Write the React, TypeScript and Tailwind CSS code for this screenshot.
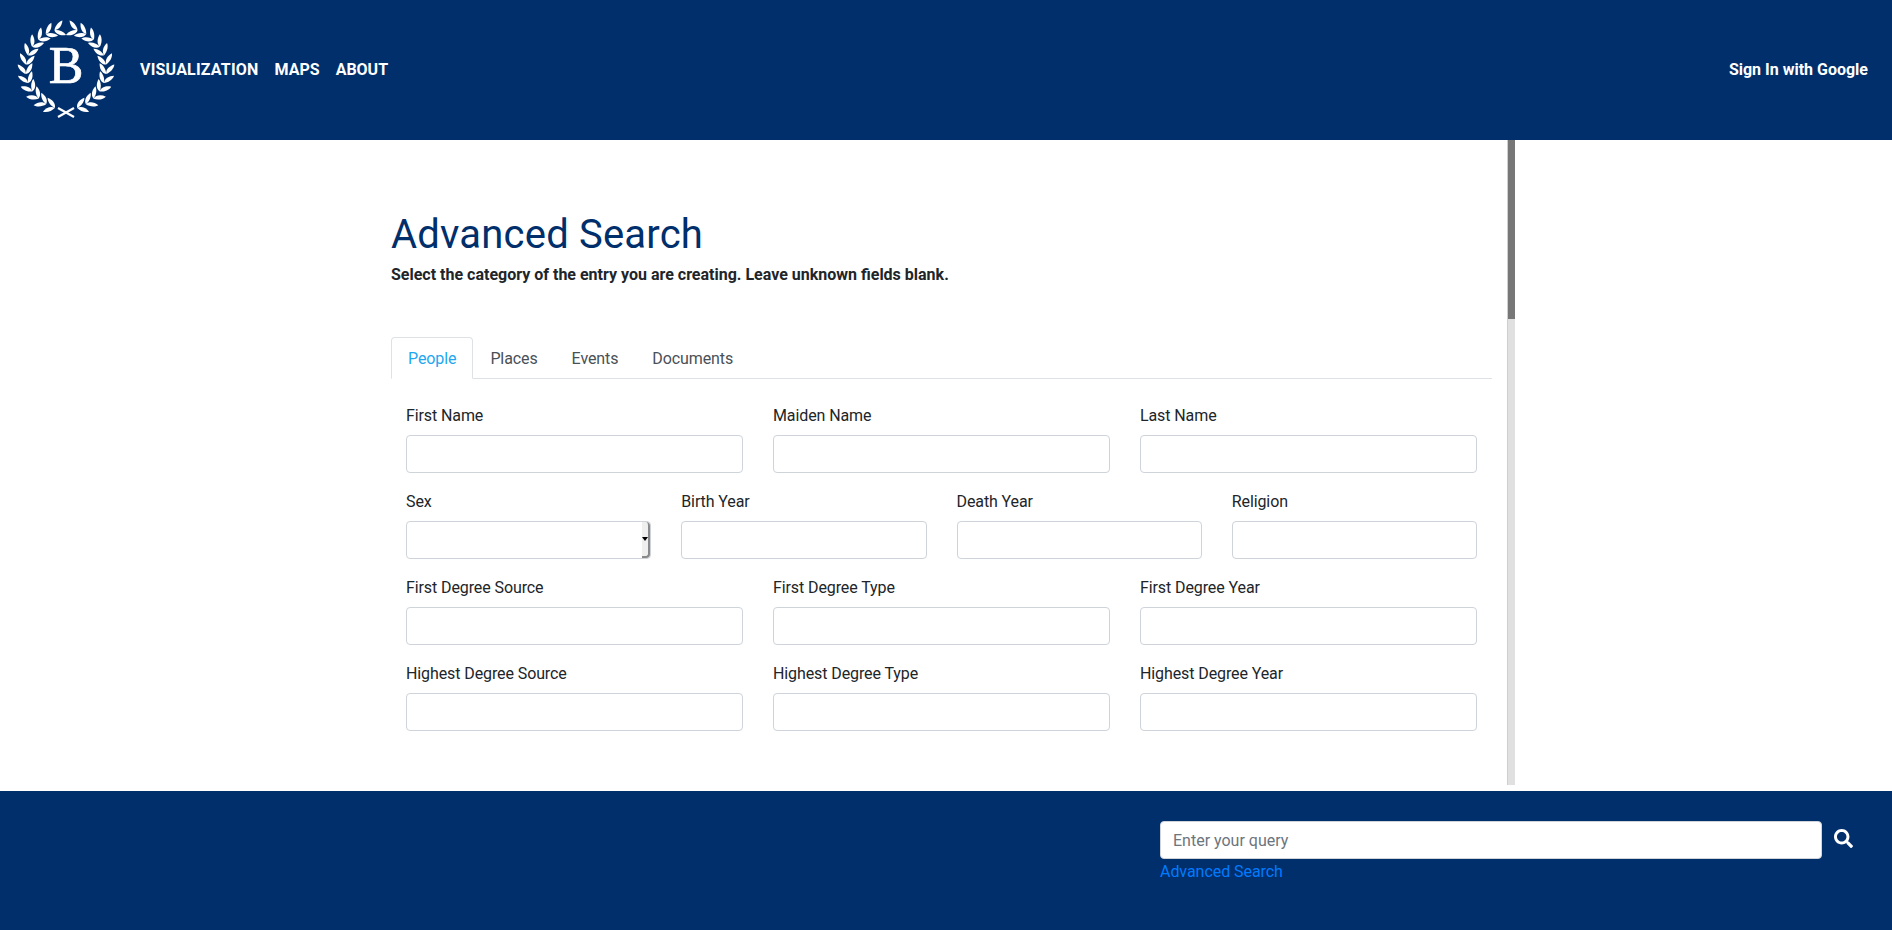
import { FaSearch } from "react-icons/fa";

const rows = [
  { cols: "grid-cols-3", fields: ["First Name", "Maiden Name", "Last Name"] },
  { cols: "grid-cols-4", fields: ["Sex", "Birth Year", "Death Year", "Religion"] },
  { cols: "grid-cols-3", fields: ["First Degree Source", "First Degree Type", "First Degree Year"] },
  { cols: "grid-cols-3", fields: ["Highest Degree Source", "Highest Degree Type", "Highest Degree Year"] },
];

const tabs = ["People", "Places", "Events", "Documents"];

// one side of the wreath, mirrored for the other
const leaves = Array.from({ length: 12 }, (_, i) => {
  const angle = 106 + i * 13.4;
  const rad = (angle * Math.PI) / 180;
  return { angle, x: 50 + 40.5 * Math.cos(rad), y: 49 + 40.5 * Math.sin(rad) };
});

const leaf = "M0 0 C-4 0 -9 -2 -11 -6 C-6 -6.5 -1 -4.5 0 0Z";

function Logo() {
  const side = (
    <>
      {leaves.map((l) => (
        <g key={l.angle} transform={`translate(${l.x} ${l.y}) rotate(${l.angle - 90})`}>
          <path d={leaf} fill="white" transform="rotate(-62)" />
          <path d={leaf} fill="white" transform="rotate(10)" />
        </g>
      ))}
      <path d="M42 88 L58 97" stroke="white" strokeWidth="2.2" />
    </>
  );
  return (
    <svg width="100" height="100" viewBox="0 0 100 100" className="shrink-0">
      {side}
      <g transform="translate(100 0) scale(-1 1)">{side}</g>
      <text x="50" y="63" textAnchor="middle" fill="white" stroke="white" strokeWidth="0.7" fontSize="52" fontFamily="Liberation Serif, serif">
        B
      </text>
    </svg>
  );
}

function SexSelect() {
  return (
    <div className="h-[38px] flex justify-end border border-[#ced4da] rounded">
      <div className="w-2 flex items-center justify-center bg-[#efefef] border-r-2 border-b-2 border-[#8a8a8a] rounded-r">
        <div className="border-x-[3px] border-t-4 border-x-transparent border-t-black" />
      </div>
    </div>
  );
}

function Field({ label }: { label: string }) {
  return (
    <div className="px-[15px] pb-4">
      <label className="block pt-px mb-[7px] leading-6 tracking-[-0.1px] text-[#212529]">{label}</label>
      {label === "Sex" ? (
        <SexSelect />
      ) : (
        <input className="block w-full h-[38px] border border-[#ced4da] rounded bg-white" />
      )}
    </div>
  );
}

export default function App() {
  return (
    <div className="h-[930px] flex flex-col bg-white overflow-hidden font-['Roboto',sans-serif]">
      <header className="h-[140px] shrink-0 bg-[#002f6c] flex items-center pl-[16px] pr-6 text-white">
        <Logo />
        <nav className="flex ml-4 font-bold">
          <a className="px-2 tracking-[0.2px]">VISUALIZATION</a>
          <a className="px-2">MAPS</a>
          <a className="px-2">ABOUT</a>
        </nav>
        <a className="ml-auto font-bold">Sign In with Google</a>
      </header>

      <main className="h-[651px] shrink-0 flex items-start">
        <div className="w-[1507px] h-full overflow-hidden pt-[71px] pl-[391px] pr-[15px]">
          <h1 className="text-[40px] leading-[48px] tracking-[0.2px] text-[#002f6c]">Advanced Search</h1>
          <p className="font-bold leading-6 mt-1 text-[#212529]">
            Select the category of the entry you are creating. Leave unknown fields blank.
          </p>
          <ul className="flex mt-[50px] border-b border-[#dee2e6]">
            {tabs.map((t, i) => (
              <li
                key={t}
                className={
                  i === 0
                    ? "px-4 pt-[9px] pb-[7px] leading-6 -mb-px tracking-[-0.1px] border border-[#dee2e6] border-b-white rounded-t text-[#1ea7f0] bg-white"
                    : "px-4 pt-[9px] pb-[7px] leading-6 -mb-px tracking-[-0.1px] border border-transparent text-[#495057]"
                }
              >
                {t}
              </li>
            ))}
          </ul>
          <form className="pt-6">
            {rows.map((r) => (
              <div key={r.fields[0]} className={`grid ${r.cols}`}>
                {r.fields.map((f) => (
                  <Field key={f} label={f} />
                ))}
              </div>
            ))}
          </form>
        </div>
        <div className="w-2 h-[645px] bg-[#e0e0e0] border-l border-[#cfcfcf]">
          <div className="h-[179px] bg-[#777777]" />
        </div>
      </main>

      <footer className="flex-1 bg-[#002f6c] pt-[30px] pl-[1160px]">
        <div className="flex items-center">
          <input
            placeholder="Enter your query"
            className="w-[662px] h-[38px] px-3 bg-white border border-[#ced4da] rounded placeholder:text-[#6c757d]"
          />
          <FaSearch className="ml-3 -mt-1 text-white" size={19} />
        </div>
        <a className="block pt-px leading-6 tracking-[-0.05px] text-[#007bff]">Advanced Search</a>
      </footer>
    </div>
  );
}
